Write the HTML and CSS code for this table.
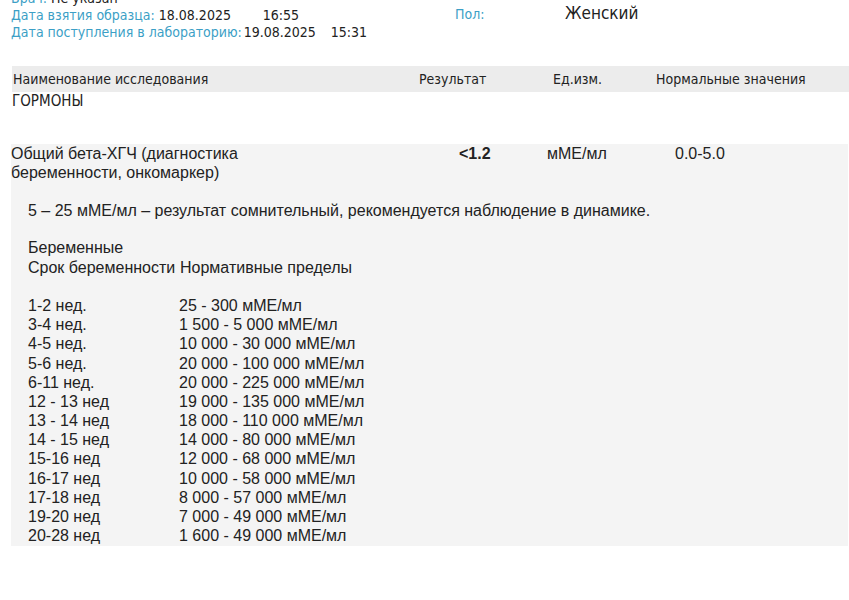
FILE: index.html
```html
<!DOCTYPE html>
<html lang="ru">
<head>
    <meta charset="UTF-8">
    <title>Результаты анализа</title>
    <link rel="stylesheet" href="styles.css">
</head>
<body>
    <div class="info">
        <div class="info-left">
            <div class="line"><span class="lbl">Врач:</span> Не указан</div>
            <div class="line"><span class="lbl">Дата взятия образца:</span> <span class="v1">18.08.2025</span><span class="t1">16:55</span></div>
            <div class="line"><span class="lbl">Дата поступления в лабораторию:</span><span class="v2">19.08.2025</span><span class="t2">15:31</span></div>
        </div>
        <div class="info-right">
            <span class="lbl sex-lbl">Пол:</span>
            <span class="sex">Женский</span>
        </div>
    </div>

    <div class="table-head">
        <div>Наименование исследования</div>
        <div>Результат</div>
        <div>Ед.изм.</div>
        <div>Нормальные значения</div>
    </div>
    <div class="group">ГОРМОНЫ</div>

    <div class="result">
        <div class="result-row">
            <div class="name">Общий бета-ХГЧ (диагностика<br>беременности, онкомаркер)</div>
            <div class="value">&lt;1.2</div>
            <div class="unit">мМЕ/мл</div>
            <div class="norm">0.0-5.0</div>
        </div>
        <div class="comment">
            <p class="note">5 – 25 мМЕ/мл – результат сомнительный, рекомендуется наблюдение в динамике.</p>
            <div class="preg">
                <div>Беременные</div>
                <div class="preg-head"><span class="term">Срок беременности</span><span>Нормативные пределы</span></div>
            </div>
            <div class="preg-list">
                <span>1-2 нед.</span><span>25 - 300 мМЕ/мл</span>
                <span>3-4 нед.</span><span>1 500 - 5 000 мМЕ/мл</span>
                <span>4-5 нед.</span><span>10 000 - 30 000 мМЕ/мл</span>
                <span>5-6 нед.</span><span>20 000 - 100 000 мМЕ/мл</span>
                <span>6-11 нед.</span><span>20 000 - 225 000 мМЕ/мл</span>
                <span>12 - 13 нед</span><span>19 000 - 135 000 мМЕ/мл</span>
                <span>13 - 14 нед</span><span>18 000 - 110 000 мМЕ/мл</span>
                <span>14 - 15 нед</span><span>14 000 - 80 000 мМЕ/мл</span>
                <span>15-16 нед</span><span>12 000 - 68 000 мМЕ/мл</span>
                <span>16-17 нед</span><span>10 000 - 58 000 мМЕ/мл</span>
                <span>17-18 нед</span><span>8 000 - 57 000 мМЕ/мл</span>
                <span>19-20 нед</span><span>7 000 - 49 000 мМЕ/мл</span>
                <span>20-28 нед</span><span>1 600 - 49 000 мМЕ/мл</span>
            </div>
        </div>
    </div>
</body>
</html>
```

FILE: styles.css
```css
body {
    margin: 0;
    background: #fff;
    color: #222;
    font-family: 'Liberation Sans', Arial, sans-serif;
}

.info {
    display: flex;
    margin-top: -10px;
    padding-left: 11px;
    font-family: 'DejaVu Sans Condensed', 'DejaVu Sans', sans-serif;
    font-size: 14px;
}
.info-left .line {
    height: 17px;
    line-height: 17px;
    white-space: nowrap;
}
.lbl {
    color: #3c9fc6;
}
.v1 {
    display: inline-block;
    width: 104px;
}
.v2 {
    display: inline-block;
    margin-left: 2px;
    width: 87px;
}
.info-right {
    display: flex;
    align-items: baseline;
    padding-top: 13px;
    margin-left: 88px;
}
.sex-lbl {
    width: 110px;
}
.sex {
    font-size: 17px;
    color: #222;
}

.table-head {
    display: grid;
    grid-template-columns: 406px 134px 103px 1fr;
    margin: 25px 0 0 12px;
    padding-left: 1px;
    height: 26px;
    line-height: 26px;
    background: #ececec;
    font-family: 'DejaVu Sans Condensed', 'DejaVu Sans', sans-serif;
    font-size: 14px;
    color: #222;
}
.group {
    padding-left: 12px;
    font-family: 'DejaVu Sans Condensed', 'DejaVu Sans', sans-serif;
    font-size: 15px;
    line-height: 18px;
}

.result {
    margin: 34px 1px 0 11px;
    padding-bottom: 1px;
    background: #f4f4f4;
    font-size: 16px;
}
.result-row {
    display: grid;
    grid-template-columns: 448px 88px 128px 1fr;
    font-size: 16px;
    line-height: 19px;
}
.value {
    font-weight: bold;
}
.comment {
    padding-left: 17px;
}
.note {
    margin: 19px 0 0;
    line-height: 19px;
}
.preg {
    margin-top: 18px;
    line-height: 19.5px;
}
.term {
    display: inline-block;
    width: 152px;
}
.preg-list {
    display: grid;
    grid-template-columns: 151px 1fr;
    margin-top: 19px;
    line-height: 19.17px;
}
```
